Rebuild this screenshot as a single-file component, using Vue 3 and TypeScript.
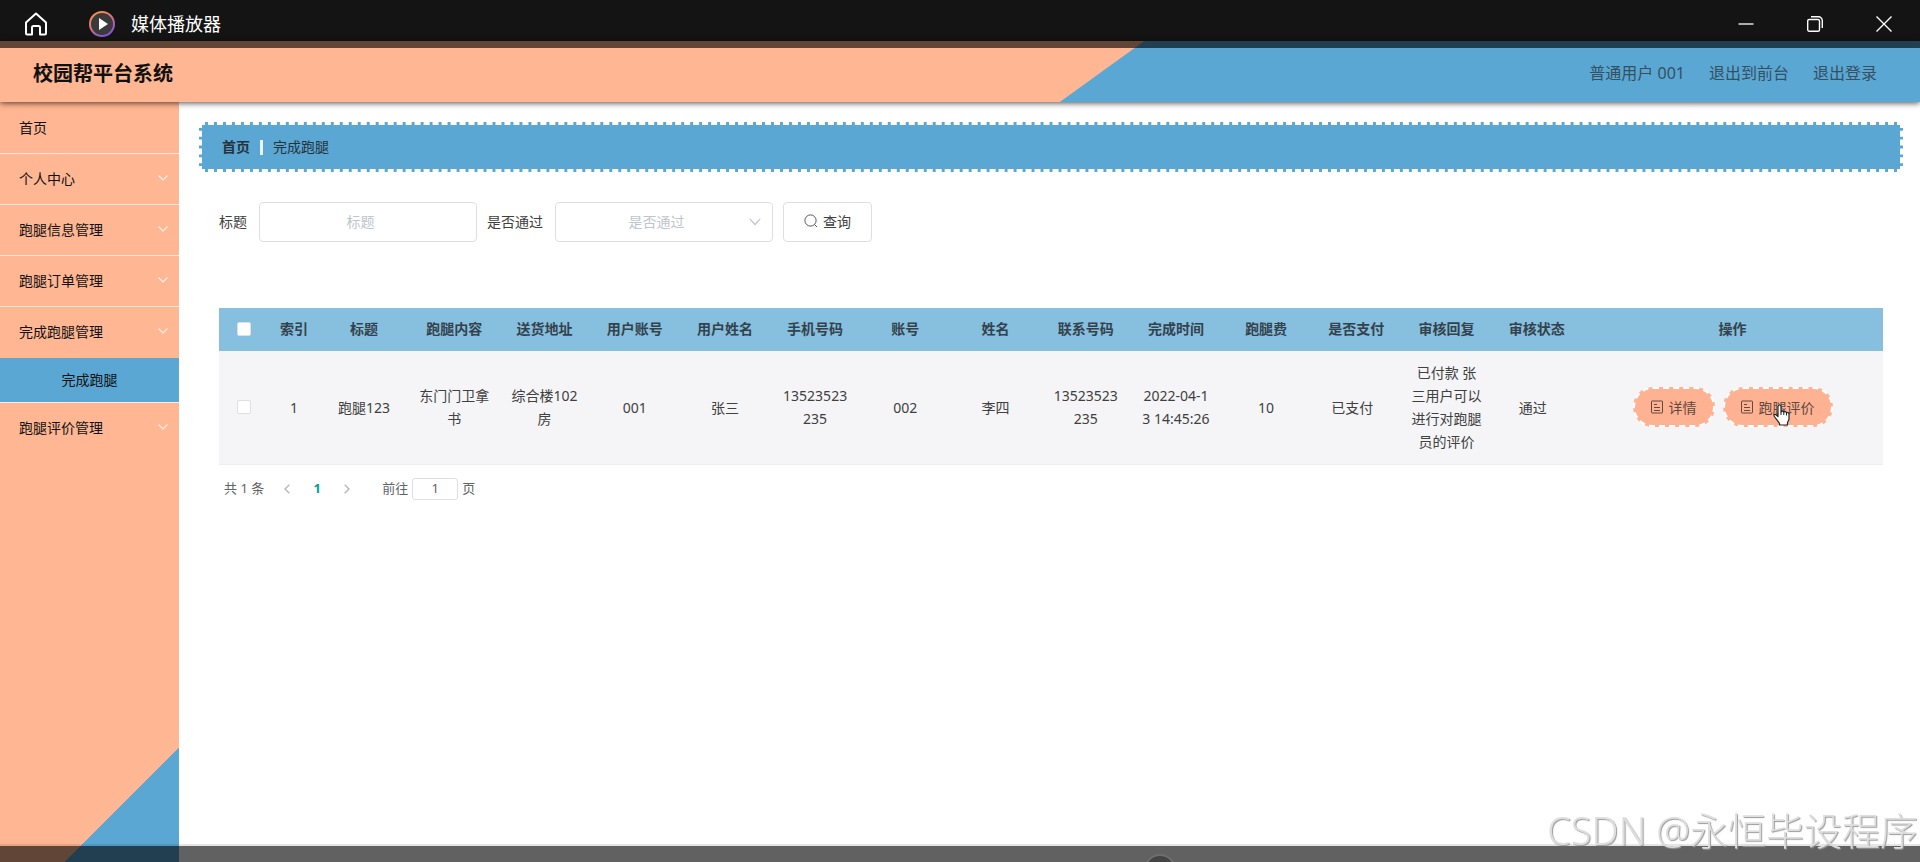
<script setup lang="ts">
import { ref } from 'vue'

interface MenuItem {
  label: string
  expandable: boolean
  children?: string[]
}

interface Column {
  label: string
  value: string
  status?: boolean
}

const menu: MenuItem[] = [
  { label: '首页', expandable: false },
  { label: '个人中心', expandable: true },
  { label: '跑腿信息管理', expandable: true },
  { label: '跑腿订单管理', expandable: true },
  { label: '完成跑腿管理', expandable: true, children: ['完成跑腿'] },
  { label: '跑腿评价管理', expandable: true },
]

const columns: Column[] = [
  { label: '标题', value: '跑腿123' },
  { label: '跑腿内容', value: '东门门卫拿书' },
  { label: '送货地址', value: '综合楼102房' },
  { label: '用户账号', value: '001' },
  { label: '用户姓名', value: '张三' },
  { label: '手机号码', value: '13523523235' },
  { label: '账号', value: '002' },
  { label: '姓名', value: '李四' },
  { label: '联系号码', value: '13523523235' },
  { label: '完成时间', value: '2022-04-13 14:45:26' },
  { label: '跑腿费', value: '10' },
  { label: '是否支付', value: '已支付', status: true },
  { label: '审核回复', value: '已付款 张三用户可以进行对跑腿员的评价' },
  { label: '审核状态', value: '通过', status: true },
]

const title = ref('')
const passed = ref('')
const page = ref('1')
</script>

<template>
  <div class="screen">
    <div class="titlebar">
      <button class="bar-button" type="button" aria-label="主页">
        <svg width="24" height="24" viewBox="0 0 24 24" fill="none" stroke="#fff" stroke-width="2" stroke-linejoin="round">
          <path d="M2 10.500 12 1.500l10 9V21.500a1 1 0 0 1-1 1h-5V15.500a1.500 1.500 0 0 0-1.500-1.500h-5A1.500 1.500 0 0 0 8 15.500v7H3a1 1 0 0 1-1-1z" />
        </svg>
      </button>
      <svg class="player-logo" width="26" height="26" viewBox="0 0 26 26">
        <defs>
          <linearGradient id="ring" x1="0" y1="0" x2="0.6" y2="1">
            <stop offset="0" stop-color="#ff9a3c" />
            <stop offset="0.5" stop-color="#d9747c" />
            <stop offset="1" stop-color="#8a55d8" />
          </linearGradient>
        </defs>
        <circle cx="13" cy="13" r="12" fill="#3a3a3a" stroke="url(#ring)" stroke-width="2" />
        <path d="M10 7v12l9-6z" fill="#fff" />
      </svg>
      <span class="player-name">媒体播放器</span>
      <div class="window-buttons">
        <button class="bar-button" type="button" aria-label="最小化">
          <svg width="16" height="16" viewBox="0 0 16 16" stroke="#fff" stroke-width="1.300"><path d="M0.500 8h15" /></svg>
        </button>
        <button class="bar-button" type="button" aria-label="还原">
          <svg width="16" height="16" viewBox="0 0 16 16" fill="none" stroke="#fff" stroke-width="1.400">
            <rect x="0.700" y="3.500" width="11.800" height="11.800" rx="1.500" />
            <path d="M4 0.800h7.500a3.800 3.800 0 0 1 3.800 3.800V12" />
          </svg>
        </button>
        <button class="bar-button" type="button" aria-label="关闭">
          <svg width="16" height="16" viewBox="0 0 16 16" stroke="#fff" stroke-width="1.400"><path d="M0.500 0.500l15 15M15.500 0.500l-15 15" /></svg>
        </button>
      </div>
    </div>

    <header class="header">
      <h1 class="brand">校园帮平台系统</h1>
      <nav class="account">
        <span>普通用户 001</span>
        <a href="#front">退出到前台</a>
        <a href="#logout">退出登录</a>
      </nav>
    </header>

    <div class="body">
      <aside class="sidebar">
        <ul class="menu">
          <li v-for="item in menu" :key="item.label" class="menu-group">
            <a class="menu-item" :class="{ open: item.children }" href="#menu">
              <span>{{ item.label }}</span>
              <svg v-if="item.expandable" width="10" height="6" viewBox="0 0 10 6" fill="none" stroke="#fff" stroke-opacity="0.8" stroke-width="1.200">
                <path d="M0.500 0.500 5 5l4.500-4.500" />
              </svg>
            </a>
            <a v-for="child in item.children" :key="child" class="submenu-item" href="#submenu">{{ child }}</a>
          </li>
        </ul>
      </aside>

      <main class="content">
        <nav class="breadcrumb">
          <a href="#home">首页</a>
          <i class="separator"></i>
          <span>完成跑腿</span>
        </nav>

        <div class="panel">
          <form class="search" @submit.prevent>
            <label for="title">标题</label>
            <input id="title" v-model="title" class="field" type="text" placeholder="标题" />
            <label for="passed">是否通过</label>
            <div class="select-wrap">
              <select id="passed" v-model="passed" class="field">
                <option value="" disabled>是否通过</option>
                <option value="yes">通过</option>
                <option value="no">未通过</option>
              </select>
              <svg class="select-arrow" width="12" height="8" viewBox="0 0 12 8" fill="none" stroke="#c0c4cc" stroke-width="1.200">
                <path d="M0.800 0.800 6 6.500l5.200-5.700" />
              </svg>
            </div>
            <button class="query" type="submit">
              <svg width="14" height="14" viewBox="0 0 14 14" fill="none" stroke="#555" stroke-width="1">
                <circle cx="6.500" cy="6.500" r="5.600" />
                <path d="M10.500 10.500 13 13" />
              </svg>
              <span>查询</span>
            </button>
          </form>

          <table class="orders">
            <colgroup>
              <col class="narrow" />
              <col class="narrow" />
              <col v-for="column in columns" :key="column.label" />
              <col class="wide" />
            </colgroup>
            <thead>
              <tr>
                <th><input class="check" type="checkbox" aria-label="全选" /></th>
                <th>索引</th>
                <th v-for="column in columns" :key="column.label">{{ column.label }}</th>
                <th>操作</th>
              </tr>
            </thead>
            <tbody>
              <tr>
                <td><input class="check" type="checkbox" aria-label="选择第 1 行" /></td>
                <td>1</td>
                <td v-for="column in columns" :key="column.label">
                  <span :class="{ status: column.status }">{{ column.value }}</span>
                </td>
                <td>
                  <div class="actions">
                    <button v-for="(action, index) in ['详情', '跑腿评价']" :key="action" class="action" type="button">
                      <svg width="12" height="14" viewBox="0 0 12 14" fill="none" stroke="#5f4a42" stroke-width="1">
                        <rect x="0.500" y="1" width="11" height="12" rx="0.500" />
                        <path d="M3 4.500h3M3 7.500h6M3 10.500h6" />
                      </svg>
                      <span>{{ action }}</span>
                      <svg v-if="index === 1" class="pointer" width="18" height="22" viewBox="0 0 18 22">
                        <path
                          d="M5 2.500C5 .5 8 .5 8 2.500V8c.3-1.300 2.600-1.200 2.800.3.500-1.100 2.500-.9 2.700.7.700-.9 2.500-.5 2.500 1.200V15c0 1.500-1.500 2.500-1.500 4v2H6.500v-1.500C5.500 17.500 3 15 1.200 12.200.3 10.500 2.200 9.600 3.400 11L5 12.700z"
                          fill="#fff"
                          stroke="#222"
                          stroke-width="1.200"
                          stroke-linejoin="round"
                        />
                        <path d="M8 8v3M10.800 8.500V11M13.500 9v2.500" stroke="#222" stroke-width="1" />
                      </svg>
                    </button>
                  </div>
                </td>
              </tr>
            </tbody>
          </table>

          <div class="pagination">
            <span>共 1 条</span>
            <button class="page-step" type="button" aria-label="上一页">
              <svg width="6" height="10" viewBox="0 0 6 10" fill="none" stroke="#b4b8c0" stroke-width="1.400"><path d="M5.300 0.700 1 5l4.300 4.300" /></svg>
            </button>
            <button class="page-current" type="button">1</button>
            <button class="page-step" type="button" aria-label="下一页">
              <svg width="6" height="10" viewBox="0 0 6 10" fill="none" stroke="#b4b8c0" stroke-width="1.400"><path d="M0.700 0.700 5 5 0.700 9.300" /></svg>
            </button>
            <label class="jump">前往 <input v-model="page" type="text" /> 页</label>
          </div>
        </div>
      </main>
    </div>

    <div class="controls"><i class="knob"></i></div>
    <div class="watermark">CSDN @永恒毕设程序</div>
  </div>
</template>

<style>
body {
  margin: 0;
  background: #fff;
}
</style>

<style scoped>
* {
  box-sizing: border-box;
}

.screen {
  display: flex;
  flex-direction: column;
  min-height: 100vh;
  font: 14px/23px 'Noto Sans', 'Noto Sans CJK SC', sans-serif;
  color: #404040;
}

a {
  color: inherit;
  text-decoration: none;
}

button,
input,
select {
  font: inherit;
  color: inherit;
}

.titlebar {
  display: flex;
  align-items: center;
  height: 41px;
  padding: 6px 28px 0 24px;
  background: #141414;
  color: #fff;
}

.bar-button {
  display: flex;
  padding: 0;
  border: 0;
  background: none;
}

.player-logo {
  margin: 0 16px 0 41px;
}

.player-name {
  padding-top: 2px;
  font-size: 18px;
}

.window-buttons {
  display: flex;
  gap: 53px;
  margin-left: auto;
}

.header {
  position: relative;
  z-index: 1;
  display: flex;
  align-items: center;
  justify-content: space-between;
  height: 61px;
  padding: 3px 43px 0 33px;
  background: #ffb692;
  box-shadow: 0 1px 6px rgba(0, 0, 0, 0.7);
}

.header::before {
  content: '';
  position: absolute;
  inset: 0;
  background: #5aa7d4;
  clip-path: polygon(59.6% 0, 100% 0, 100% 100%, 55.2% 100%);
}

.header::after {
  content: '';
  position: absolute;
  inset: 0 0 auto;
  height: 7px;
  background: rgba(0, 0, 0, 0.62);
}

.brand {
  margin: 0;
  font-size: 20px;
  font-weight: 700;
  color: #111;
}

.account {
  position: relative;
  display: flex;
  gap: 24px;
  font-size: 16px;
  color: #35505f;
}

.body {
  display: flex;
  flex: 1;
}

.sidebar {
  flex: none;
  width: 179px;
  padding-top: 1px;
  background: linear-gradient(315deg, #5aa7d4 81px, #ffb692 81px);
}

.menu {
  margin: 0;
  padding: 0;
  list-style: none;
}

.menu-item {
  display: flex;
  align-items: center;
  justify-content: space-between;
  height: 51px;
  padding: 0 11px 2px 19px;
  border-bottom: 1px solid #ffe9df;
  color: #111;
}

.menu-item.open,
.menu-group:last-child .menu-item {
  border-bottom-color: transparent;
}

.submenu-item {
  display: block;
  height: 45px;
  border-bottom: 1px solid #ffe9df;
  background: #5aa7d4;
  color: #111;
  line-height: 43px;
  text-align: center;
}

.content {
  flex: 1;
  min-width: 0;
  padding: 20px 17px 40px 20px;
}

.breadcrumb {
  display: flex;
  align-items: center;
  height: 50px;
  padding: 0 20px 2px;
  border: 3px dashed #fff;
  background: #5aa7d4;
  color: #26333b;
}

.breadcrumb a {
  font-weight: 700;
}

.separator {
  width: 3px;
  height: 15px;
  margin: 2px 10px 0;
  background: #eaf5fb;
}

.panel {
  padding: 30px 20px 0;
}

.search {
  display: flex;
  align-items: center;
  margin-bottom: 66px;
}

.search label {
  margin-right: 12px;
  padding-bottom: 2px;
}

.field {
  display: block;
  width: 218px;
  height: 40px;
  margin-right: 10px;
  padding: 0 30px 2px 15px;
  border: 1px solid #dcdfe6;
  border-radius: 4px;
  background: #fff;
  text-align: center;
  outline: none;
}

.field::placeholder {
  color: #c0c4cc;
}

select.field {
  appearance: none;
  color: #c0c4cc;
  text-align-last: center;
}

.select-wrap {
  position: relative;
}

.select-arrow {
  position: absolute;
  top: 16px;
  right: 22px;
  pointer-events: none;
}

.query {
  display: flex;
  align-items: center;
  gap: 5px;
  height: 40px;
  padding: 0 20px 2px;
  border: 1px solid #dcdfe6;
  border-radius: 4px;
  background: #fff;
}

.orders {
  width: 100%;
  border-collapse: collapse;
  table-layout: fixed;
  text-align: center;
}

.narrow {
  width: 50px;
}

.wide {
  width: 301px;
}

.orders th {
  padding: 9px 0 11px;
  background: #87bfde;
  color: #33424c;
  font-weight: 700;
}

.orders td {
  padding: 10px 10px 11px;
  border-bottom: 1px solid #ebeef5;
  background: #f5f5f7;
  word-break: break-all;
}

.status {
  margin-right: 8px;
}

.check {
  display: block;
  width: 14px;
  height: 14px;
  margin: 0 auto;
  border: 1px solid #dcdfe6;
  border-radius: 2px;
  background: #fff;
  appearance: none;
}

.actions {
  display: flex;
  justify-content: center;
  gap: 8px;
}

.action {
  position: relative;
  display: flex;
  align-items: center;
  gap: 6px;
  height: 40px;
  padding: 0 16px;
  border: 2px dashed #fff;
  border-radius: 20px;
  background: #ffb292;
  color: #5f4a42;
}

.pointer {
  position: absolute;
  top: 15px;
  left: 48px;
}

.pagination {
  display: flex;
  align-items: center;
  padding: 12px 5px;
  font-size: 13px;
  color: #606266;
}

.page-step,
.page-current {
  display: flex;
  align-items: center;
  justify-content: center;
  width: 30px;
  height: 22px;
  padding: 0;
  border: 0;
  background: none;
}

.page-step:first-of-type {
  margin-left: 8px;
}

.page-current {
  color: #00a092;
  font-weight: 700;
}

.jump {
  display: flex;
  align-items: center;
  gap: 4px;
  margin-left: 20px;
}

.jump input {
  width: 46px;
  height: 22px;
  padding: 0;
  border: 1px solid #dcdfe6;
  border-radius: 3px;
  text-align: center;
}

.controls {
  position: fixed;
  z-index: 2;
  inset: auto 0 0;
  height: 18px;
  overflow: hidden;
  border-top: 2px solid rgba(0, 0, 0, 0.1);
  background: rgba(0, 0, 0, 0.62);
  background-clip: padding-box;
}

.knob {
  position: absolute;
  top: 8px;
  left: 60.4%;
  width: 32px;
  height: 32px;
  margin-left: -16px;
  border: 2px solid #6e6e6e;
  border-radius: 50%;
  background: #444;
}

.watermark {
  position: fixed;
  z-index: 3;
  right: 2px;
  bottom: 12px;
  color: #dedede;
  font-size: 38px;
  font-weight: 300;
  line-height: 40px;
  text-shadow: 1px 1px 1px #999;
  white-space: nowrap;
}
</style>
